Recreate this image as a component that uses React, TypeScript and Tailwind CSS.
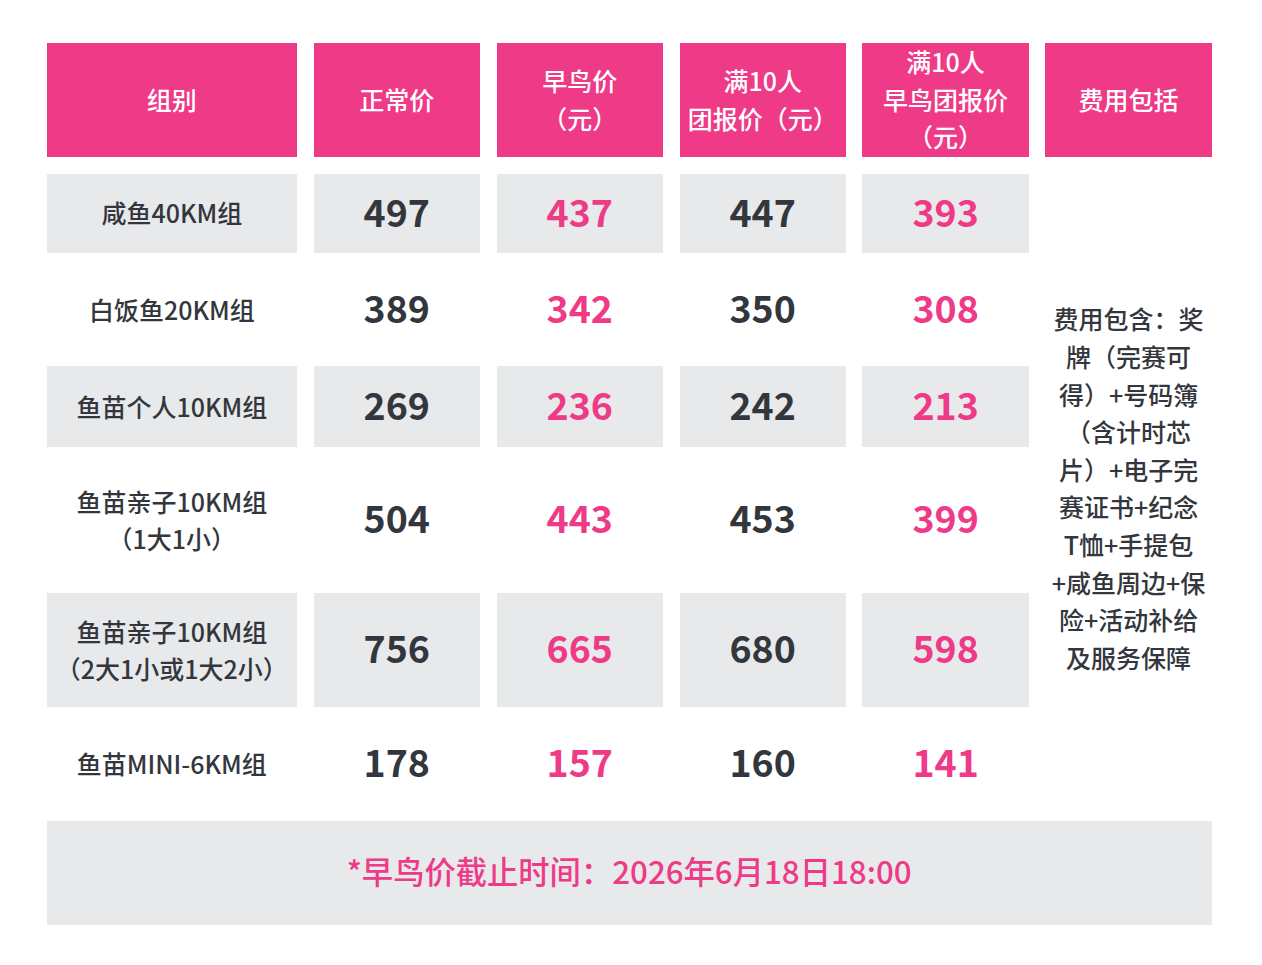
import React from "react";

const PINK = "text-[#ee3a87]";
const DARK = "text-[#33373d]";

type Row = { label: string[]; vals: number[]; gray: boolean };

const rows: Row[] = [
  { label: ["咸鱼40KM组"], vals: [497, 437, 447, 393], gray: true },
  { label: ["白饭鱼20KM组"], vals: [389, 342, 350, 308], gray: false },
  { label: ["鱼苗个人10KM组"], vals: [269, 236, 242, 213], gray: true },
  { label: ["鱼苗亲子10KM组", "（1大1小）"], vals: [504, 443, 453, 399], gray: false },
  { label: ["鱼苗亲子10KM组", "（2大1小或1大2小）"], vals: [756, 665, 680, 598], gray: true },
  { label: ["鱼苗MINI-6KM组"], vals: [178, 157, 160, 141], gray: false },
];

const headers: string[][] = [
  ["组别"],
  ["正常价"],
  ["早鸟价", "（元）"],
  ["满10人", "团报价（元）"],
  ["满10人", "早鸟团报价", "（元）"],
  ["费用包括"],
];

const feeLines = [
  "费用包含：奖",
  "牌（完赛可",
  "得）+号码簿",
  "（含计时芯",
  "片）+电子完",
  "赛证书+纪念",
  "T恤+手提包",
  "+咸鱼周边+保",
  "险+活动补给",
  "及服务保障",
];

export default function App() {
  return (
    <div
      className="w-[1262px] h-[965px] bg-white pt-[43.3px] pl-[46.7px]"
      style={{ fontFamily: '"Noto Sans CJK SC", "Noto Sans", sans-serif' }}
    >
      <div className="w-[1165px] grid grid-cols-[250.3px_repeat(5,1fr)] grid-rows-[113.7px_79.5px_79.7px_80.7px_113px_113.7px_80.3px_104.6px] gap-[16.7px]">
        {headers.map((h, i) => (
          <div
            key={"h" + i}
            className="bg-[#ee3a87] text-white flex flex-col items-center justify-center text-[25px] leading-[37.5px] font-medium pb-[1px]"
          >
            {h.map((l, j) => (
              <div key={j} className="whitespace-nowrap">{l}</div>
            ))}
          </div>
        ))}
        {rows.map((r, ri) => (
          <React.Fragment key={"r" + ri}>
            <div
              className={`${r.gray ? "bg-[#e8e9eb]" : "bg-white"} ${DARK} col-start-1 flex flex-col items-center justify-center text-[25px] leading-[37px] font-medium pb-[1px]`}
            >
              {r.label.map((l, j) => (
                <div key={j} className="whitespace-nowrap">{l}</div>
              ))}
            </div>
            {r.vals.map((v, vi) => (
              <div
                key={vi}
                className={`${r.gray ? "bg-[#e8e9eb]" : "bg-white"} ${vi % 2 === 1 ? PINK : DARK} flex items-center justify-center text-[37.5px] leading-none font-bold pb-[6px]`}
              >
                {v}
              </div>
            ))}
          </React.Fragment>
        ))}
        <div
          className={`col-start-6 row-start-2 row-span-6 flex flex-col items-center justify-center ${DARK} text-[25px] leading-[37.6px] font-medium pb-[1px]`}
        >
          {feeLines.map((l, i) => (
            <div key={i} className="whitespace-nowrap">
              {l}
            </div>
          ))}
        </div>
        <div
          className={`col-span-6 bg-[#e8e9eb] ${PINK} flex items-center justify-center text-[31.3px] font-medium pb-[3px]`}
        >
          *早鸟价截止时间：2026年6月18日18:00
        </div>
      </div>
    </div>
  );
}
